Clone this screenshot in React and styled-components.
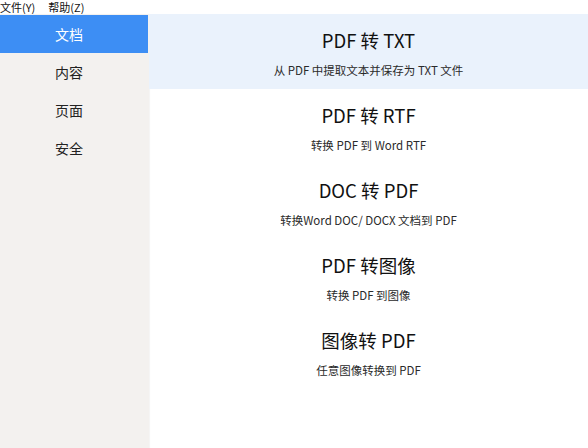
import React from "react";
import styled, { createGlobalStyle } from "styled-components";

const Global = createGlobalStyle`
  html, body { margin: 0; padding: 0; background: #ffffff; }
  body { font-family: "Noto Sans CJK SC", "Noto Sans", sans-serif; }
  #root { width: 588px; height: 448px; }
`;

const Page = styled.div`
  width: 588px;
  height: 448px;
  display: flex;
  flex-direction: column;
  overflow: hidden;
`;

const MenuBar = styled.div`
  height: 14px;
  display: flex;
  align-items: center;
  gap: 13px;
  font-size: 11px;
  line-height: 14px;
  color: #111;
  background: #fff;
`;

const MenuItem = styled.span``;

const Body = styled.div`
  flex: 1;
  display: flex;
`;

const Sidebar = styled.div`
  width: 149px;
  background: #f3f1ef;
  box-shadow: 1px 0 1px rgba(0, 0, 0, 0.04);
  display: flex;
  flex-direction: column;
  padding-top: 1px;
`;

const NavItem = styled.div`
  height: 38px;
  width: 148px;
  display: flex;
  align-items: center;
  justify-content: center;
  padding-right: 10px;
  box-sizing: border-box;
  font-size: 14px;
  color: ${(p) => (p.$active ? "#ffffff" : "#222")};
  background: ${(p) => (p.$active ? "#3d8ef4" : "transparent")};
`;

const Main = styled.div`
  flex: 1;
  display: flex;
  flex-direction: column;
`;

const Item = styled.div`
  height: 75px;
  display: flex;
  flex-direction: column;
  align-items: center;
  background: ${(p) => (p.$active ? "#eaf2fc" : "transparent")};
`;

const Title = styled.div`
  margin-top: 14px;
  font-size: 18.5px;
  line-height: 24px;
  color: #111;
`;

const Sub = styled.div`
  margin-top: 11px;
  font-size: 11.5px;
  line-height: 14px;
  color: #2a2a2a;
`;

const nav = ["文档", "内容", "页面", "安全"];
const items = [
  ["PDF 转 TXT", "从 PDF 中提取文本并保存为 TXT 文件"],
  ["PDF 转 RTF", "转换 PDF 到 Word RTF"],
  ["DOC 转 PDF", "转换Word DOC/ DOCX 文档到 PDF"],
  ["PDF 转图像", "转换 PDF 到图像"],
  ["图像转 PDF", "任意图像转换到 PDF"],
];

export default function App() {
  return (
    <Page>
      <Global />
      <MenuBar>
        <MenuItem>文件(Y)</MenuItem>
        <MenuItem>帮助(Z)</MenuItem>
      </MenuBar>
      <Body>
        <Sidebar>
          {nav.map((n, i) => (
            <NavItem key={n} $active={i === 0}>{n}</NavItem>
          ))}
        </Sidebar>
        <Main>
          {items.map(([t, s], i) => (
            <Item key={t} $active={i === 0}>
              <Title>{t}</Title>
              <Sub>{s}</Sub>
            </Item>
          ))}
        </Main>
      </Body>
    </Page>
  );
}
